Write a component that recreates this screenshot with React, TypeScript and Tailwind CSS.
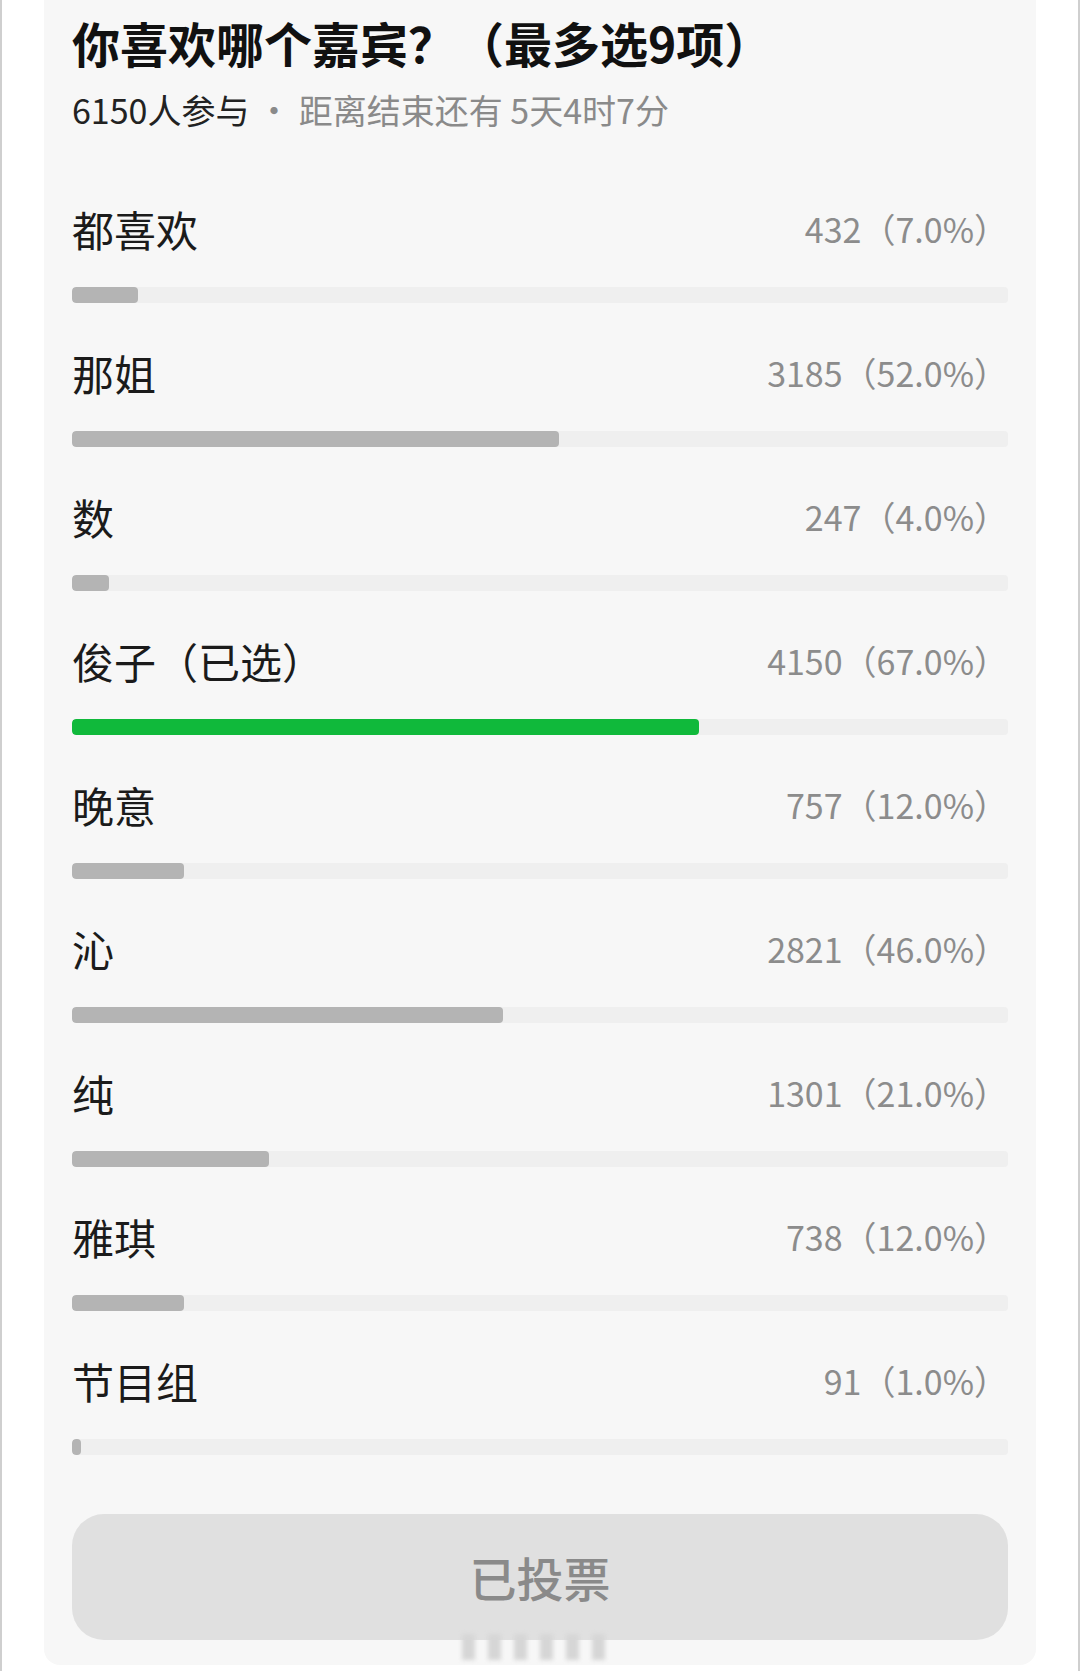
import React from 'react'

const options = [
  { name: '都喜欢', count: 432, pct: 7 },
  { name: '那姐', count: 3185, pct: 52 },
  { name: '数', count: 247, pct: 4 },
  { name: '俊子', count: 4150, pct: 67, picked: true },
  { name: '晚意', count: 757, pct: 12 },
  { name: '沁', count: 2821, pct: 46 },
  { name: '纯', count: 1301, pct: 21 },
  { name: '雅琪', count: 738, pct: 12 },
  { name: '节目组', count: 91, pct: 1 },
]

function OptionRow({ name, count, pct, picked }: { name: string; count: number; pct: number; picked?: boolean }) {
  return (
    <div>
      <div className="flex items-center justify-between h-[56px]">
        <span className="text-[42px] leading-[56px] text-[#1b1b1b]">
          {name}
          {picked && '（已选）'}
        </span>
        <span className="text-[34px] leading-[56px] text-[#8c8c8c]">
          {count}（{pct.toFixed(1)}%）
        </span>
      </div>
      <div className="mt-[30px] h-[16px] rounded-[4px] bg-[#efefef] overflow-hidden">
        <div
          className={`h-full rounded-[4px] ${picked ? 'bg-[#10b93b]' : 'bg-[#b4b4b4]'}`}
          style={{ width: `${Math.max(pct, 1)}%` }}
        />
      </div>
    </div>
  )
}

export default function App() {
  return (
    <div
      className="w-[1080px] h-[1671px] bg-white border-x-2 border-[#cfcfcf] overflow-hidden"
      style={{ fontFamily: '"Noto Sans CJK SC", "Noto Sans", sans-serif' }}
    >
      <div className="mx-[42px] h-[1665px] bg-[#f7f7f7] rounded-b-[16px] px-[28px] pt-[12px]">
        {/* Header */}
        <h1 className="text-[48px] leading-[60px] font-bold text-[#111] whitespace-nowrap">
          你喜欢哪个嘉宾？（最多选9项）
        </h1>
        <p className="mt-[16px] text-[34px] leading-[44px] whitespace-nowrap">
          <span className="text-[#222]">6150人参与</span>
          <span className="text-[#8a8a8a]"> · 距离结束还有 5天4时7分</span>
        </p>

        {/* Options */}
        <div className="mt-[69px] flex flex-col gap-[42px]">
          {options.map(o => (
            <OptionRow key={o.name} {...o} />
          ))}
        </div>

        {/* Vote button */}
        <div className="relative mt-[59px]">
          <button className="w-full h-[126px] rounded-[32px] bg-[#e0e0e0] text-[47px] font-medium text-[#8a8a8a]">
            已投票
          </button>
          <div className="absolute left-1/2 -translate-x-1/2 top-[112px] text-[26px] text-[#d6d6d6] blur-[2px] whitespace-nowrap">
            ▌▌▌▌▌▌
          </div>
        </div>
      </div>
    </div>
  )
}
